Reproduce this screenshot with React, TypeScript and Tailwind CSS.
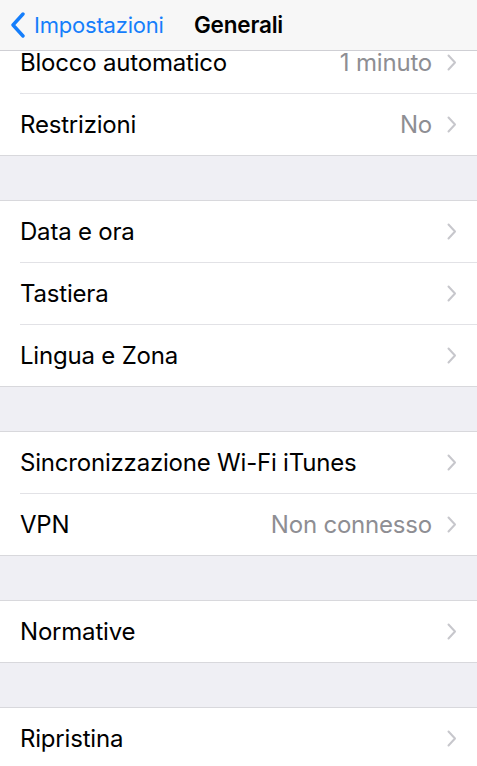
const groups: { label: string; value?: string }[][] = [
  [{ label: "Blocco automatico", value: "1 minuto" }, { label: "Restrizioni", value: "No" }],
  [{ label: "Data e ora" }, { label: "Tastiera" }, { label: "Lingua e Zona" }],
  [{ label: "Sincronizzazione Wi-Fi iTunes" }, { label: "VPN", value: "Non connesso" }],
  [{ label: "Normative" }],
  [{ label: "Ripristina" }],
];

function Chevron() {
  return (
    <svg width="10" height="17" viewBox="0 0 10 17" className="shrink-0">
      <path d="M1.5 1.5 L8 8.5 L1.5 15.5" fill="none" stroke="#c7c7cc" strokeWidth="2" strokeLinecap="round" strokeLinejoin="round" />
    </svg>
  );
}

export default function App() {
  return (
    <div className="relative h-[766px] w-[477px] overflow-hidden bg-[#efeff4] font-['Inter',sans-serif] text-[24px] tracking-[-0.2px] text-black">
      <header className="absolute inset-x-0 top-0 z-10 flex h-[51px] items-center border-b border-[#cfcfd4] bg-[#f7f7f7]">
        <div className="flex items-center pl-[10px] text-[#157efb]">
          <svg width="16" height="26" viewBox="0 0 16 26">
            <path d="M13 2 L3 13 L13 24" fill="none" stroke="#157efb" strokeWidth="3.4" strokeLinecap="round" strokeLinejoin="round" />
          </svg>
          <span className="ml-[8px] text-[22px]">Impostazioni</span>
        </div>
        <span className="absolute left-1/2 -translate-x-1/2 text-[22.5px] font-semibold">Generali</span>
      </header>

      <div className="flex flex-col gap-[44px] pt-[31px]">
        {groups.map((rows, gi) => (
          <section key={gi} className="border-y border-[#d8d8dc] bg-white">
            {rows.map((row, ri) => (
              <div key={row.label} className="pl-[20px]">
                <div
                  className={`flex items-center pr-[20px] ${ri < rows.length - 1 ? "h-[62px] border-b border-[#e2e2e6]" : "h-[61px]"}`}
                >
                  <span className="flex-1">{row.label}</span>
                  {row.value && <span className="mr-[15px] text-[#8e8e93]">{row.value}</span>}
                  <Chevron />
                </div>
              </div>
            ))}
          </section>
        ))}
      </div>
    </div>
  );
}
